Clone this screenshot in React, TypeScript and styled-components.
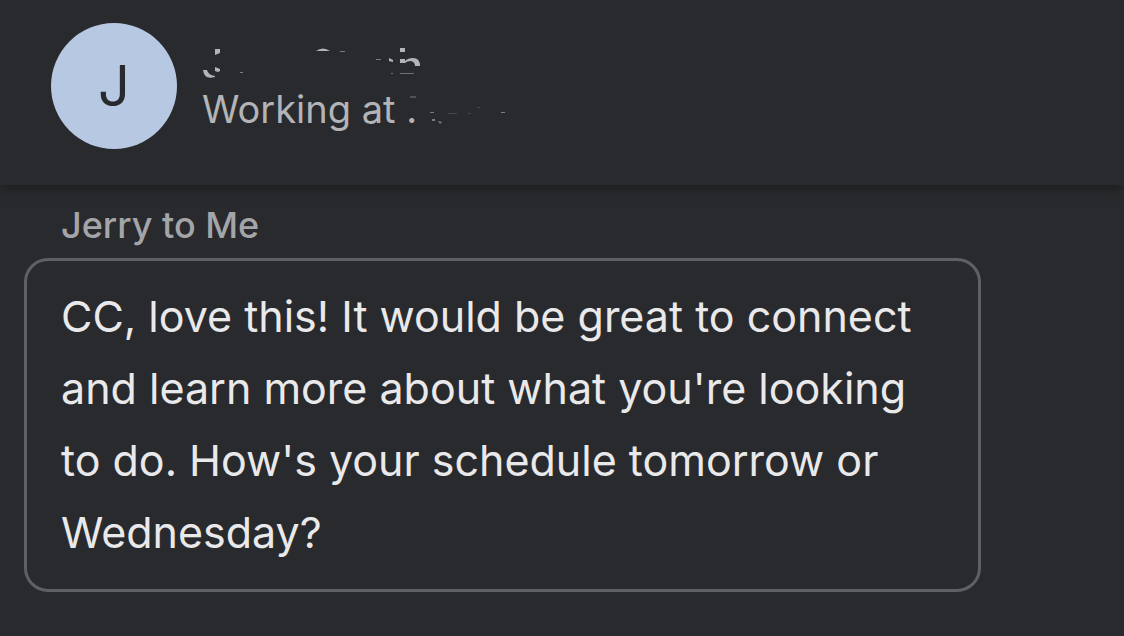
import React from "react";
import styled, { createGlobalStyle } from "styled-components";

const GlobalStyle = createGlobalStyle`
  * { box-sizing: border-box; }
  body {
    margin: 0;
    background: #292a2d;
    color: #e9e9eb;
    font-family: Inter, "Liberation Sans", sans-serif;
  }
`;

const Page = styled.main`
  min-height: 100vh;
  overflow: hidden;
`;

const Header = styled.header`
  display: flex;
  align-items: center;
  gap: 25px;
  padding: 23px 51px 36px;
  box-shadow: 0 6px 8px -2px #1d1e21;
`;

const Avatar = styled.div`
  display: flex;
  align-items: center;
  justify-content: center;
  flex: none;
  width: 126px;
  height: 126px;
  border-radius: 50%;
  background: #b7c8e2;
  color: #292a2d;
  font-size: 56px;
`;

const Contact = styled.div`
  display: flex;
  flex-direction: column;
  color: #b3b4b7;
`;

const NameMarks = styled.svg`
  display: block;
  width: 220px;
  height: 46px;
`;

const Status = styled.p`
  display: flex;
  margin: 0;
  font-size: 38px;
  line-height: 46px;
  white-space: nowrap;
`;

const CompanyMarks = styled.svg`
  width: 100px;
  height: 46px;
`;

const Thread = styled.section`
  padding: 22px 143px 44px 24px;
`;

const Sender = styled.h2`
  margin: 0 0 15px;
  padding-left: 37px;
  color: #a4a5a8;
  font-size: 36px;
  font-weight: 500;
  line-height: 36px;
`;

const Bubble = styled.p`
  margin: 0;
  padding: 19px 34px 21px;
  border: 3px solid #5f6064;
  border-radius: 24px;
  font-size: 43px;
  line-height: 72px;
`;

export default function App() {
  return (
    <Page>
      <GlobalStyle />
      <Header>
        <Avatar>J</Avatar>
        <Contact>
          <NameMarks viewBox="0 0 220 46" fill="currentColor" aria-hidden="true">
            <path d="M13 9h5v4l-5 2z" />
            <path d="M1 30h4q1 5 8 6v1q-11 3-12-7z" />
            <path d="M13 27l5 2v2l-2 1-3-1z" />
            <path d="M114 11q7-5 14 0z" />
            <path d="M138 11h5v1h-5zM174 19h5v1h-5zM38 32h3v1h-3z" opacity=".6" />
            <path d="M187 18l4 2v2l-4-1z" />
            <path d="M198 8h5v4h-5z" />
            <path d="M198 19h5v2q3-3 8-3 7 0 7 8h-5q0-4-4-5-4 0-6 2h-5z" />
            <path d="M198 33h14v1h-14zM189 33h2v1h-2z" opacity=".5" />
          </NameMarks>
          <Status>
            Working at .
            <CompanyMarks viewBox="418 86 100 46" fill="currentColor" overflow="visible" aria-hidden="true">
              <path d="M411 96h6v2h-6z" opacity=".3" />
              <path d="M431 112h4v1h-4zM502 112h4v1h-4z" opacity=".6" />
              <path d="M433 119h3v2h-3zM439 121l4 1-2 2z" opacity=".6" />
              <path d="M478 107h3v1h-3zM449 113h9v1h-9zM469 113h3v1h-3z" opacity=".2" />
            </CompanyMarks>
          </Status>
        </Contact>
      </Header>
      <Thread>
        <Sender>Jerry to Me</Sender>
        <Bubble>
          CC, love this! It would be great to connect and learn more about what
          you're looking to do. How's your schedule tomorrow or Wednesday?
        </Bubble>
      </Thread>
    </Page>
  );
}
